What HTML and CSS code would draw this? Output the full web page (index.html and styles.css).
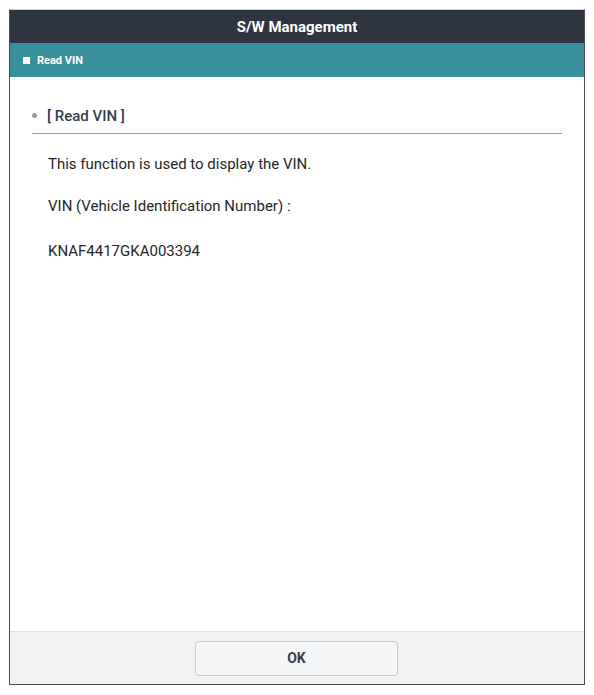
FILE: index.html
```html
<!DOCTYPE html>
<html>
<head>
<meta charset="utf-8">
<link rel="stylesheet" href="styles.css">
</head>
<body>
<div class="frame">
  <div class="titlebar">S/W Management</div>
  <div class="subbar"><span class="sq"></span><span class="subtitle">Read VIN</span></div>
  <div class="content">
    <div class="heading"><span class="dot"></span><span class="htext">[ Read VIN ]</span></div>
    <p class="line l1">This function is used to display the VIN.</p>
    <p class="line l2">VIN (Vehicle Identification Number) :</p>
    <p class="line l3">KNAF4417GKA003394</p>
  </div>
  <div class="footer"><button class="ok">OK</button></div>
</div>
</body>
</html>
```
FILE: styles.css
```css
* { box-sizing: border-box; }
html, body { margin: 0; padding: 0; background: #fff; }
body { font-family: Roboto, "Liberation Sans", sans-serif; }
.frame {
  margin: 9px 0 0 9px;
  width: 576px;
  height: 676px;
  border-top: 1px solid #d0d0d0;
  border-left: 1px solid #4a4a4a;
  border-right: 1px solid #4a4a4a;
  border-bottom: 1px solid #4a4a4a;
  display: flex;
  flex-direction: column;
}
.titlebar {
  height: 33px;
  background: #2e3440;
  color: #fff;
  font-weight: 700;
  font-size: 15px;
  display: flex;
  align-items: center;
  justify-content: center;
}
.subbar {
  height: 34px;
  background: #3a8f9d;
  display: flex;
  align-items: center;
  padding-left: 13px;
  gap: 7px;
}
.sq { width: 7px; height: 7px; background: #fff; }
.subtitle { color: #fff; font-weight: 700; font-size: 11px; }
.content {
  flex: 1;
  padding: 29px 22px 0 22px;
}
.heading {
  display: flex;
  align-items: center;
  height: 28px;
  padding-bottom: 8px;
  border-bottom: 1px solid #6fadb8;
}
.dot { width: 5px; height: 5px; border-radius: 50%; background: #9a9a9a; margin-right: 10px; }
.htext { font-size: 15px; font-weight: 500; color: #344052; line-height: 20px; }
.line {
  margin: 0 0 0 16px;
  font-size: 15px;
  line-height: 20px;
  color: #262626;
}
.l1 { margin-top: 20px; }
.l2 { margin-top: 22px; }
.l3 { margin-top: 25px; }
.footer {
  height: 53px;
  border-top: 1px solid #dcdfe3;
  background: #eff1f3;
  display: flex;
  align-items: center;
  justify-content: center;
}
.ok {
  width: 203px;
  height: 35px;
  background: #f4f5f7;
  border: 1px solid #c6c8cc;
  border-radius: 4px;
  font-family: Roboto, "Liberation Sans", sans-serif;
  font-weight: 700;
  font-size: 14px;
  color: #3a3f48;
  margin-left: -1px;
}
```
